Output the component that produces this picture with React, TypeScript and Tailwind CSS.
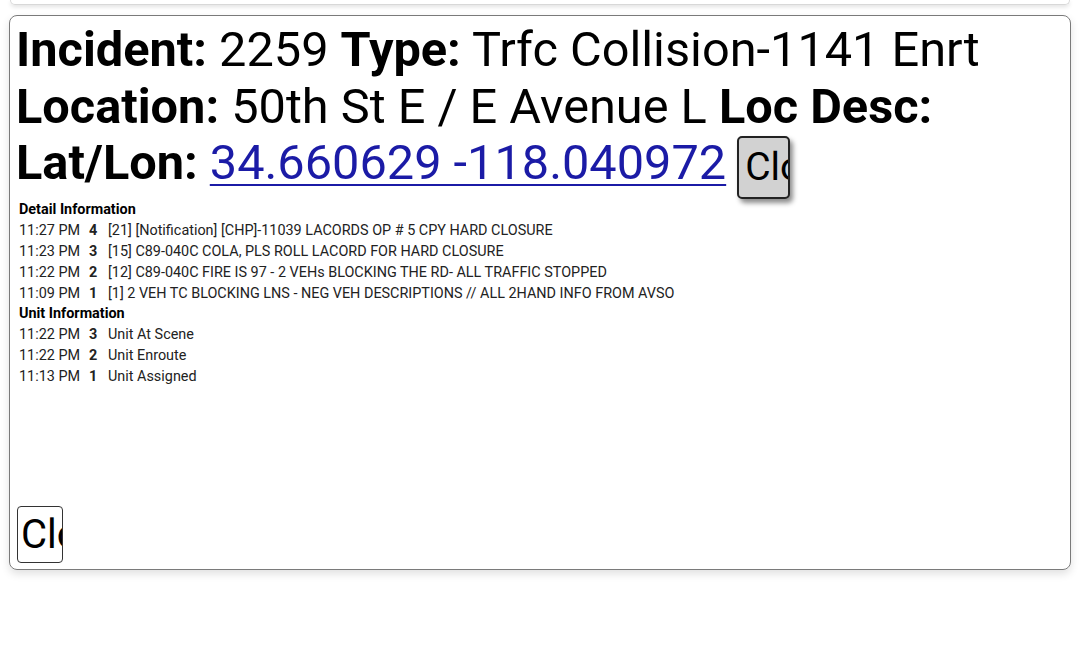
import React from "react";

const details = [
  { time: "11:27 PM", n: "4", text: "[21] [Notification] [CHP]-11039 LACORDS OP # 5 CPY HARD CLOSURE" },
  { time: "11:23 PM", n: "3", text: "[15] C89-040C COLA, PLS ROLL LACORD FOR HARD CLOSURE" },
  { time: "11:22 PM", n: "2", text: "[12] C89-040C FIRE IS 97 - 2 VEHs BLOCKING THE RD- ALL TRAFFIC STOPPED" },
  { time: "11:09 PM", n: "1", text: "[1] 2 VEH TC BLOCKING LNS - NEG VEH DESCRIPTIONS // ALL 2HAND INFO FROM AVSO" },
];

const units = [
  { time: "11:22 PM", n: "3", text: "Unit At Scene" },
  { time: "11:22 PM", n: "2", text: "Unit Enroute" },
  { time: "11:13 PM", n: "1", text: "Unit Assigned" },
];

type Row = { time: string; n: string; text: string };

const LogTable = ({ title, rows }: { title: string; rows: Row[] }) => (
  <div className="flex flex-col">
    <div className="font-bold h-[20.9px] leading-[20.9px]">{title}</div>
    {rows.map((r, i) => (
      <div key={i} className="flex h-[20.9px] leading-[20.9px] text-[#222]">
        <span className="w-[70px] shrink-0">{r.time}</span>
        <span className="w-[19px] shrink-0 font-bold">{r.n}</span>
        <span>{r.text}</span>
      </div>
    ))}
  </div>
);

export default function App() {
  return (
    <div
      className="w-[1080px] h-[671px] bg-white text-black overflow-hidden"
      style={{ fontFamily: "Roboto, 'Liberation Sans', sans-serif" }}
    >
      {/* bottom edge of previous card */}
      <div className="mx-[10px] h-[5px] rounded-b-lg border-x border-b border-[#d8d8d8] shadow-[0_2px_4px_rgba(0,0,0,0.12)]" />

      {/* incident card */}
      <div className="mx-[9px] mt-[10px] h-[555px] rounded-lg border border-[#7a7a7a] shadow-[0_4px_8px_rgba(0,0,0,0.12)] pl-[6px] pr-2 pt-[6px] pb-[6px] flex flex-col">
        <div className="text-[48.7px] leading-[56.5px] whitespace-nowrap">
          <div>
            <b>Incident:</b> 2259 <b>Type:</b> Trfc Collision-1141 Enrt
          </div>
          <div>
            <b>Location:</b> 50th St E / E Avenue L <b>Loc Desc:</b>
          </div>
          <div className="flex items-start">
            <b>Lat/Lon:</b>
            <a href="#" className="ml-[12px] text-[#1b1ba6] underline decoration-[2px] underline-offset-[5px]">
              34.660629 -118.040972
            </a>
            <button className="ml-[11px] mt-[1px] w-[53px] h-[63px] overflow-hidden rounded-[5px] border-2 border-[#222] bg-[#d2d2d2] shadow-[3px_4px_5px_rgba(0,0,0,0.45)] text-[39px] leading-none pl-[6px] text-left whitespace-nowrap">
              Close
            </button>
          </div>
        </div>

        <div className="mt-[1px] ml-[3px] text-[14.4px]">
          <LogTable title="Detail Information" rows={details} />
          <LogTable title="Unit Information" rows={units} />
        </div>

        <button className="mt-auto ml-[1px] w-[46px] h-[57px] overflow-hidden rounded-[4px] border border-[#333] bg-white text-[40px] leading-none pl-[3px] text-left whitespace-nowrap">
          Close
        </button>
      </div>
    </div>
  );
}
